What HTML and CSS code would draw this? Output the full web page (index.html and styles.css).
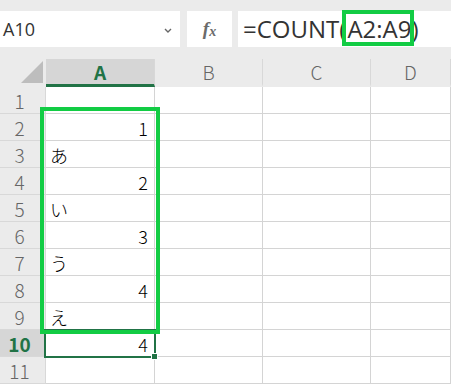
FILE: index.html
```html
<!DOCTYPE html>
<html lang="ja">
<head>
    <meta charset="UTF-8">
    <title>COUNT</title>
    <link rel="stylesheet" href="styles.css">
</head>
<body>
    <div class="sheet">
        <div class="formula-bar">
            <div class="name-box">
                <span>A10</span>
                <svg class="chevron" width="8" height="5" viewBox="0 0 8 5"><path d="M1 1l3 3 3-3" fill="none" stroke="#666" stroke-width="1.4"/></svg>
            </div>
            <div class="fx-box"><span>f</span><span class="x">x</span></div>
            <div class="formula-box">=COUNT(<span class="ref">A2:A9</span>)</div>
        </div>

        <div class="grid">
            <div class="corner"><div class="triangle"></div></div>
            <div class="col-head active">A</div>
            <div class="col-head">B</div>
            <div class="col-head">C</div>
            <div class="col-head">D</div>

            <div class="row-head">1</div><div class="cell"></div><div class="cell"></div><div class="cell"></div><div class="cell"></div>
            <div class="row-head">2</div><div class="cell num">1</div><div class="cell"></div><div class="cell"></div><div class="cell"></div>
            <div class="row-head">3</div><div class="cell">あ</div><div class="cell"></div><div class="cell"></div><div class="cell"></div>
            <div class="row-head">4</div><div class="cell num">2</div><div class="cell"></div><div class="cell"></div><div class="cell"></div>
            <div class="row-head">5</div><div class="cell">い</div><div class="cell"></div><div class="cell"></div><div class="cell"></div>
            <div class="row-head">6</div><div class="cell num">3</div><div class="cell"></div><div class="cell"></div><div class="cell"></div>
            <div class="row-head">7</div><div class="cell">う</div><div class="cell"></div><div class="cell"></div><div class="cell"></div>
            <div class="row-head">8</div><div class="cell num">4</div><div class="cell"></div><div class="cell"></div><div class="cell"></div>
            <div class="row-head">9</div><div class="cell">え</div><div class="cell"></div><div class="cell"></div><div class="cell"></div>
            <div class="row-head active">10</div>
            <div class="cell num selected">4<div class="cursor"></div><div class="handle"></div></div>
            <div class="cell"></div><div class="cell"></div><div class="cell"></div>
            <div class="row-head">11</div><div class="cell"></div><div class="cell"></div><div class="cell"></div><div class="cell"></div>

            <!-- range highlight A2:A9 -->
            <div class="range-box"></div>
        </div>
    </div>
</body>
</html>
```

FILE: styles.css
```css
body {
    margin: 0;
    padding: 0;
    background: #ffffff;
    font-family: "Noto Sans CJK JP", "Noto Sans", sans-serif;
    overflow: hidden;
}

.sheet {
    width: 451px;
    height: 387px;
    background: #ebebeb;
}

/* Formula bar */
.formula-bar {
    display: flex;
    height: 36px;
    padding-top: 11px;
    border-top: 3px solid #e1e1e1;
    margin-top: -3px;
}

.name-box {
    width: 180px;
    background: #fff;
    display: flex;
    align-items: center;
    justify-content: space-between;
    padding: 0 8px 0 3px;
    box-sizing: border-box;
    font-family: "Open Sans", sans-serif;
    font-size: 18px;
    color: #333;
}

.chevron {
    margin-top: 2px;
}

.fx-box {
    width: 45px;
    margin-left: 7px;
    background: #fff;
    display: flex;
    align-items: center;
    justify-content: center;
    font-family: "Liberation Serif", serif;
    font-style: italic;
    font-weight: 700;
    font-size: 19px;
    color: #6b6b6b;
}

.fx-box .x {
    font-size: 14px;
    margin-top: 5px;
}

.formula-box {
    flex: 1;
    margin-left: 6px;
    background: #fff;
    padding-left: 5px;
    font-family: "Open Sans", sans-serif;
    font-size: 24px;
    line-height: 36px;
    color: #333;
    white-space: nowrap;
}

.formula-box .ref {
    position: relative;
    display: inline-block;
    margin-left: 1px;
}

.formula-box .ref::after {
    content: "";
    position: absolute;
    left: -5px;
    right: -3px;
    top: -1px;
    bottom: 1px;
    border: 4px solid #12cc44;
}

/* Grid */
.grid {
    position: relative;
    display: grid;
    grid-template-columns: 46px 109px 108px 108px 80px;
    grid-template-rows: 28px repeat(11, 27px);
    margin-top: 12px;
}

.corner {
    background: #ebebeb;
    display: flex;
    justify-content: flex-end;
    align-items: flex-end;
    padding: 0 3px 4px 0;
}

.triangle {
    width: 0;
    height: 0;
    border-left: 22px solid transparent;
    border-bottom: 22px solid #bdbdbd;
}

.col-head {
    background: #ebebeb;
    border-right: 1px solid #d8d8d8;
    border-bottom: 3px solid #ebebeb;
    display: flex;
    justify-content: center;
    align-items: center;
    font-family: "Noto Sans CJK JP", sans-serif;
    font-weight: 300;
    font-size: 19px;
    color: #666;
}

.col-head.active {
    background: #d6d6d6;
    border-bottom: 3px solid #217346;
    font-weight: 700;
    color: #217346;
}

.row-head {
    background: #ebebeb;
    border-bottom: 1px solid #d8d8d8;
    border-right: 1px solid #d8d8d8;
    display: flex;
    justify-content: center;
    align-items: center;
    padding-right: 6px;
    font-family: "Noto Sans CJK JP", sans-serif;
    font-weight: 300;
    font-size: 19px;
    color: #666;
}

.row-head.active {
    background: #d6d6d6;
    font-weight: 700;
    color: #217346;
}

.cell {
    position: relative;
    background: #fff;
    border-right: 1px solid #d4d4d4;
    border-bottom: 1px solid #d4d4d4;
    display: flex;
    align-items: flex-end;
    padding: 0 6px 0 4px;
    font-family: "Noto Sans CJK JP", sans-serif;
    font-weight: 300;
    font-size: 18px;
    line-height: 24px;
    color: #000;
}

.cell.num {
    justify-content: flex-end;
}

.cell.selected {
    z-index: 1;
}

.cursor {
    position: absolute;
    left: -2px;
    right: -2px;
    top: -1px;
    bottom: -2px;
    border: 2px solid #217346;
}

.handle {
    position: absolute;
    right: -4px;
    bottom: -4px;
    width: 5px;
    height: 5px;
    background: #217346;
    border: 1px solid #fff;
}

.range-box {
    position: absolute;
    z-index: 2;
    left: 40px;
    top: 48px;
    width: 120px;
    height: 227px;
    border: 4px solid #12cc44;
    box-sizing: border-box;
    pointer-events: none;
}
```
